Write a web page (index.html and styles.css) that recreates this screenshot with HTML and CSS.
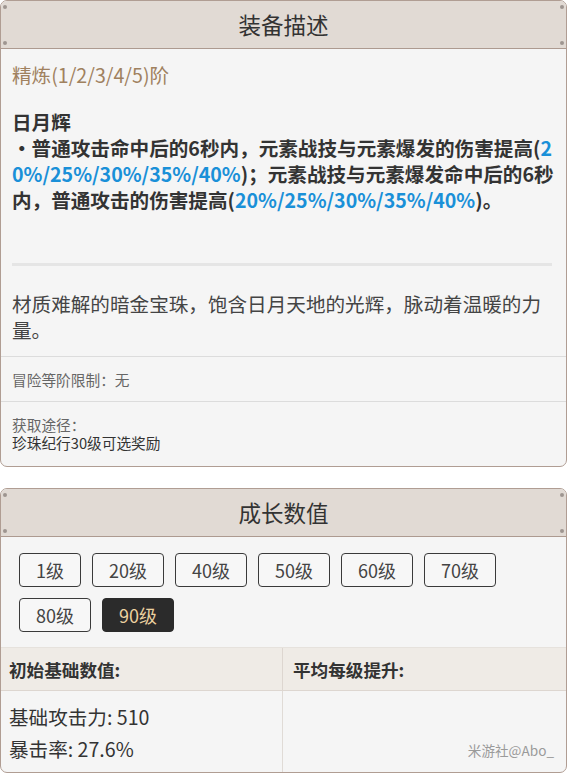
FILE: index.html
```html
<!DOCTYPE html>
<html lang="zh-CN">
<head>
<meta charset="utf-8">
<title>装备描述</title>
<link rel="stylesheet" href="styles.css">
</head>
<body>
<section class="card">
  <header class="card-head">
    <span class="dot tl"></span><span class="dot bl"></span>
    <span class="dot tr"></span><span class="dot br"></span>
    <h2>装备描述</h2>
  </header>
  <div class="desc">
    <p class="refine">精炼(1/2/3/4/5)阶</p>
    <p class="skill"><b>日月辉</b><br><b>・普通攻击命中后的6秒内，元素战技与元素爆发的伤害提高(<span class="blue">2</span><br><span class="blue">0%/25%/30%/35%/40%</span>)；元素战技与元素爆发命中后的6秒<br>内，普通攻击的伤害提高(<span class="blue">20%/25%/30%/35%/40%</span>)。</b></p>
    <hr class="sep">
    <p class="lore">材质难解的暗金宝珠，饱含日月天地的光辉，脉动着温暖的力量。</p>
  </div>
  <div class="row limit">冒险等阶限制：无</div>
  <div class="row source">
    <span class="label">获取途径：</span>
    <span class="val">珍珠纪行30级可选奖励</span>
  </div>
</section>

<section class="card card2">
  <header class="card-head">
    <span class="dot tl"></span><span class="dot bl"></span>
    <span class="dot tr"></span><span class="dot br"></span>
    <h2>成长数值</h2>
  </header>
  <div class="levels">
    <button class="lv w1">1级</button>
    <button class="lv">20级</button>
    <button class="lv">40级</button>
    <button class="lv">50级</button>
    <button class="lv">60级</button>
    <button class="lv">70级</button>
    <button class="lv">80级</button>
    <button class="lv active">90级</button>
  </div>
  <div class="stats">
    <div class="th">初始基础数值:</div>
    <div class="th th2">平均每级提升:</div>
    <div class="td">
      <div>基础攻击力: 510</div>
      <div>暴击率: 27.6%</div>
    </div>
    <div class="td td2"></div>
  </div>
  <span class="watermark">米游社@Abo_</span>
</section>
</body>
</html>
```

FILE: styles.css
```css
html, body {
  margin: 0;
  padding: 0;
  background: #ffffff;
}
body {
  font-family: "Noto Sans CJK SC", "Noto Sans", sans-serif;
  color: #333;
  width: 567px;
}
.card {
  position: relative;
  border: 1px solid #b09d93;
  border-radius: 7px;
  background: #f5f5f5;
  overflow: hidden;
}
.card2 {
  margin-top: 21px;
  height: 285px;
  box-sizing: border-box;
}
.card-head {
  position: relative;
  background: #e1dad4;
  border-bottom: 1px solid #ad9a90;
  height: 47px;
  display: flex;
  align-items: center;
  justify-content: center;
}
.card-head h2 {
  margin: 0;
  font-size: 22.5px;
  font-weight: 400;
  color: #333;
  line-height: 1;
}
.dot {
  position: absolute;
  width: 4px;
  height: 4px;
  border-radius: 50%;
  background: #9e9590;
}
.dot.tl { left: 2px; top: 4px; }
.dot.bl { left: 2px; bottom: 3px; }
.dot.tr { right: 2px; top: 4px; }
.dot.br { right: 2px; bottom: 3px; }

.desc {
  padding: 13px 11px 13px 11px;
}
.desc p {
  margin: 0;
  font-size: 19.6px;
  line-height: 26px;
}
.refine {
  color: #a0815f;
}
.skill {
  margin-top: 21px !important;
  color: #333;
  white-space: nowrap;
}
.skill b { font-weight: 700; }
.blue { color: #1a90d8; }
.sep {
  border: 0;
  height: 3px;
  background: #e5e5e5;
  margin: 50px 3px 25px 0;
}
.lore {
  color: #444;
}
.row {
  border-top: 1px solid #dcdcdc;
  padding: 0 11px;
  font-size: 14.7px;
}
.limit {
  height: 44px;
  display: flex;
  align-items: center;
  color: #666;
}
.source {
  display: flex;
  flex-direction: column;
  padding-top: 14px;
  padding-bottom: 14px;
  line-height: 18px;
}
.source .label { color: #666; }
.source .val { color: #333; }

.levels {
  display: flex;
  flex-wrap: wrap;
  gap: 11px 11px;
  padding: 16px 18px 15px 18px;
}
.lv {
  font-family: inherit;
  width: 72px;
  height: 34px;
  border: 1px solid #3a3a3a;
  border-radius: 4px;
  background: #f7f7f7;
  color: #444;
  font-size: 18px;
  padding: 0;
  cursor: pointer;
}
.lv.w1 { width: 62px; }
.lv.active {
  background: #2b2b2b;
  color: #ecd2a0;
  border-color: #2b2b2b;
}
.stats {
  display: grid;
  grid-template-columns: 281px 1fr;
  border-top: 1px solid #e6e2dd;
}
.th {
  background: #efebe6;
  height: 42px;
  display: flex;
  align-items: center;
  padding-left: 8px;
  font-size: 17.6px;
  font-weight: 700;
  color: #333;
  border-bottom: 1px solid #ddd6d0;
}
.th2 {
  border-left: 1px solid #ddd6d0;
  padding-left: 10px;
}
.td {
  padding: 10px 8px;
  font-size: 19.6px;
  line-height: 32px;
  color: #333;
  min-height: 90px;
}
.td2 {
  border-left: 1px solid #e0dbd6;
}
.watermark {
  position: absolute;
  right: 12px;
  top: 251px;
  font-size: 13.6px;
  color: #9a9a9a;
}
```
